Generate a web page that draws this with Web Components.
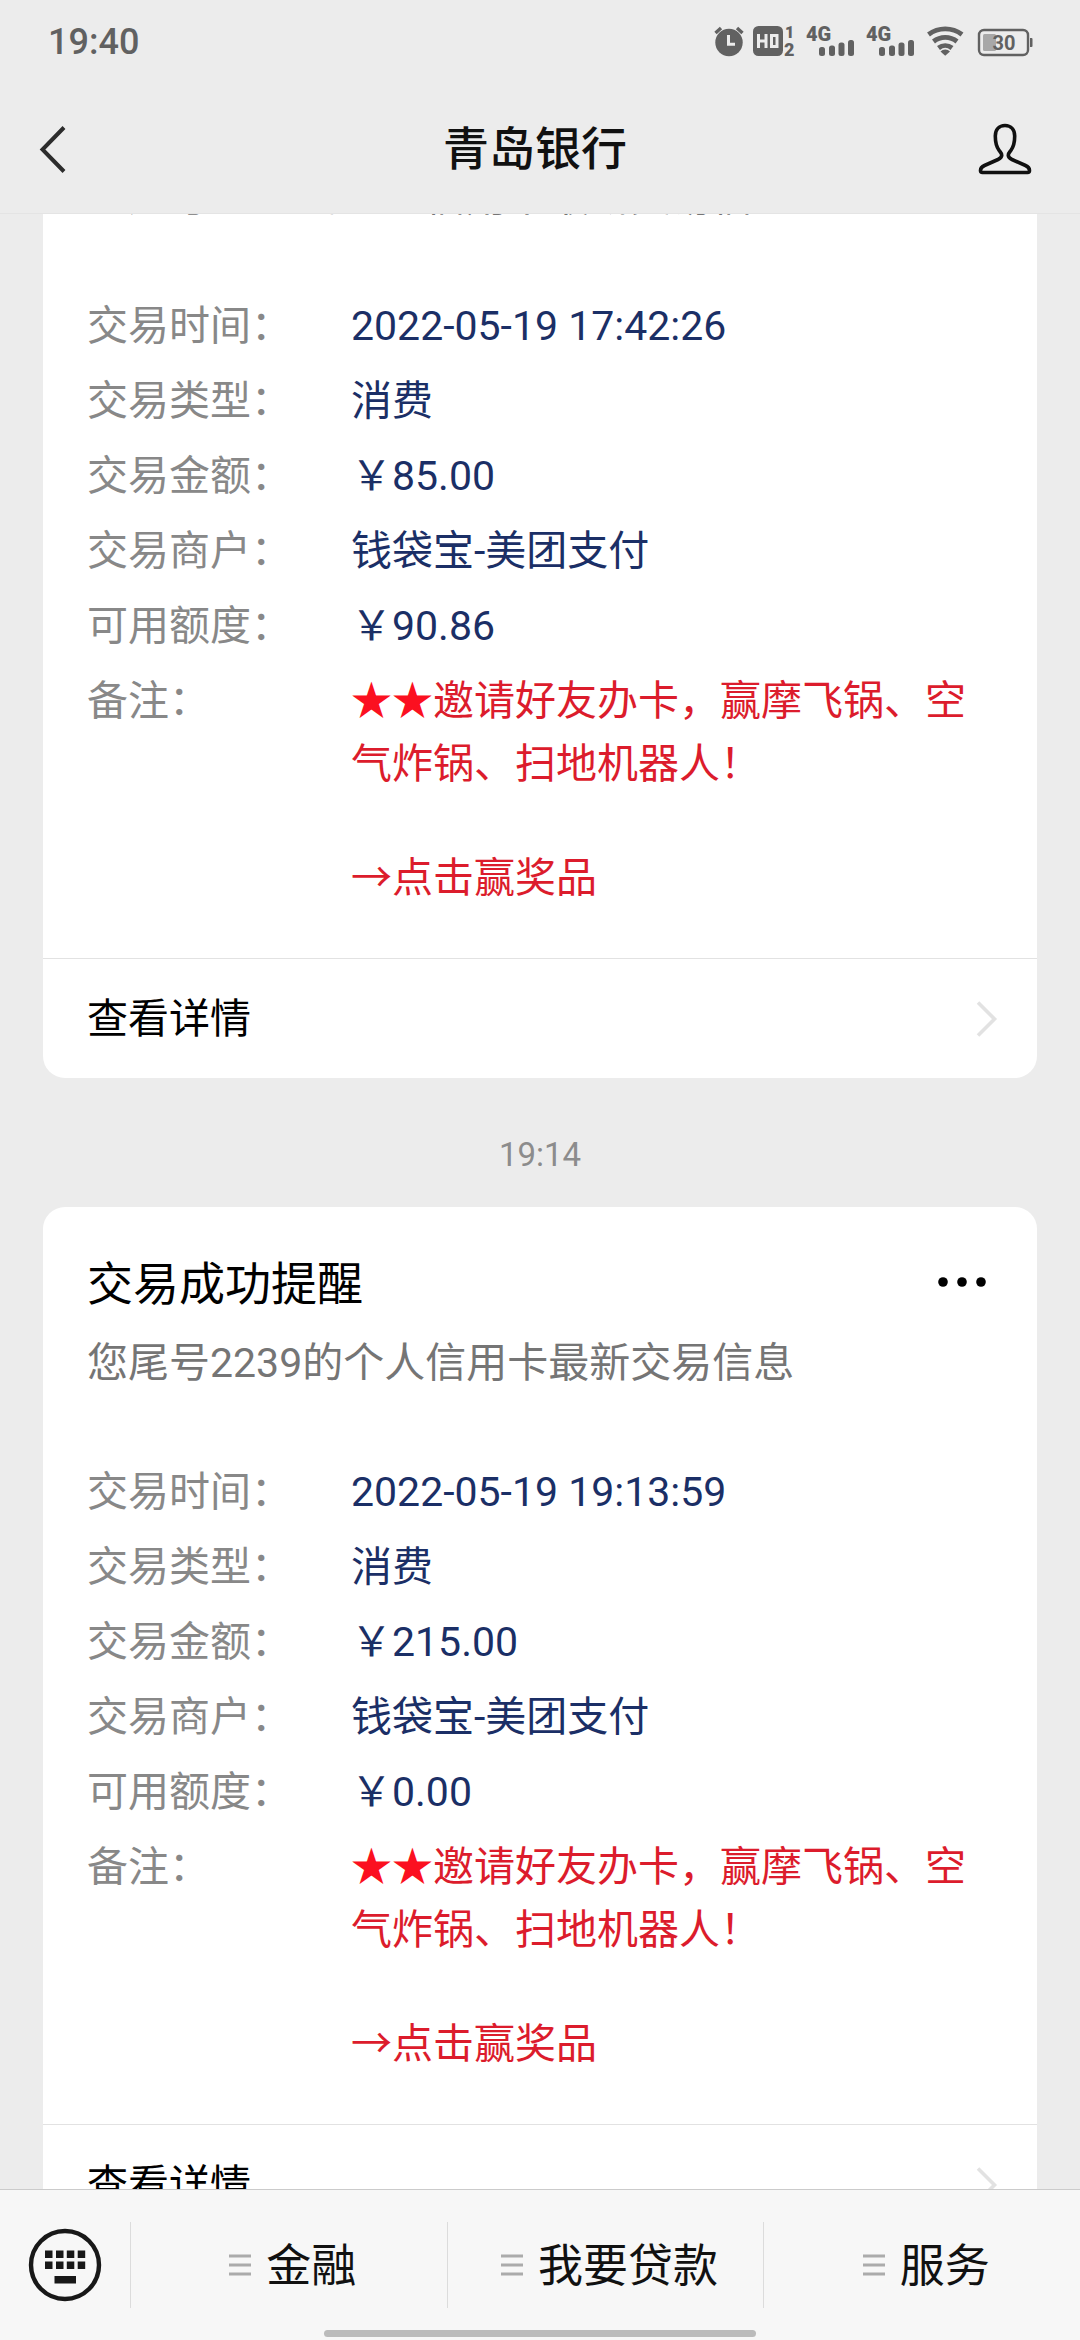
<!DOCTYPE html>
<html lang="zh-CN">
<head>
<meta charset="utf-8">
<meta name="viewport" content="width=device-width, initial-scale=1">
<title>青岛银行</title>
<style>
  html, body { height: 100%; }
  body { margin: 0; background: #ececec; color: #000; font-family: Roboto, "Noto Sans CJK SC", sans-serif; }
</style>
</head>
<body>
<chat-app></chat-app>

<template id="t-status">
  <style>
    :host { display: flex; align-items: center; justify-content: space-between; height: 84px; padding: 0 48px; box-sizing: border-box; color: #616161; }
    .time { font-size: 36px; line-height: 42px; font-weight: 500; }
    svg { display: block; overflow: visible; }
    text { font-family: Roboto, sans-serif; font-weight: 900; fill: #616161; }
  </style>
  <span class="time">19:40</span>
  <svg width="318" height="34" viewBox="714 26 318 34" fill="#616161" role="img" aria-label="状态图标">
    <circle cx="729" cy="43.500" r="13.700"/>
    <path d="M715.500 34l5.500-5M742.500 34l-5.500-5" stroke="#616161" stroke-width="3.400"/>
    <path d="M728.500 36v9.200h6.500" fill="none" stroke="#ececec" stroke-width="3"/>
    <rect x="753" y="27" width="30" height="30" rx="5.500"/>
    <path d="M758.500 35v14M766 35v14M758.500 42h7.500M771.500 36.500h5.500v11h-5.500z" fill="none" stroke="#ececec" stroke-width="3"/>
    <text x="785" y="38.500" font-size="16">1</text>
    <text x="784" y="56.500" font-size="18">2</text>
    <text x="806" y="41.500" font-size="20">4G</text>
    <g id="bars"><rect x="819" y="48" width="6" height="9" rx="2.500"/><rect x="829" y="46.500" width="6" height="10.500" rx="2.500"/><rect x="838.500" y="43.500" width="6" height="13.500" rx="2.500"/><rect x="848" y="41" width="6" height="16" rx="2.500"/></g>
    <text x="866" y="41.500" font-size="20">4G</text>
    <use href="#bars" x="60"/>
    <g fill="none" stroke="#616161" stroke-width="4.800">
      <path d="M928.500 35.500a28 28 0 0 1 33.500 0"/>
      <path d="M933.500 42.500a19 19 0 0 1 23.500 0"/>
      <path d="M938.500 49a11 11 0 0 1 13.500 0"/>
    </g>
    <path d="M940.500 52.500a6.500 6.500 0 0 1 9.500 0l-4.800 4.300z"/>
    <rect x="979" y="31" width="49" height="25" rx="5" fill="none" stroke="#616161" stroke-width="2.400"/>
    <rect x="983" y="35" width="13" height="17" rx="1.500" fill="#a8a8a8"/>
    <path d="M1030 39h1.500a1 1 0 0 1 1 1v7a1 1 0 0 1-1 1h-1.500z"/>
    <text x="992.500" y="50.500" font-size="20" style="font-weight:700">30</text>
  </svg>
</template>

<template id="t-nav">
  <style>
    :host { display: grid; grid-template-columns: 1fr auto 1fr; align-items: center; height: 130px; padding: 0 48px 0 38px; box-sizing: border-box; border-bottom: 1px solid #e4e4e4; }
    h1 { margin: 0; font-size: 46px; line-height: 60px; font-weight: 500; color: #111; }
    button { border: 0; padding: 0; background: none; display: block; }
    .me { justify-self: end; }
    svg { display: block; fill: none; }
  </style>
  <button aria-label="返回"><svg width="32" height="48" viewBox="0 0 32 48" stroke="#2c2c2c" stroke-width="4"><path d="M26 2.500L4.500 24.500L26 46.500"/></svg></button>
  <h1><slot></slot></h1>
  <button class="me" aria-label="公众号资料"><svg width="54" height="52" viewBox="0 0 54 52" stroke="#111" stroke-width="3.600" stroke-linejoin="round"><path d="M27 2.500c-6 0-9.700 4.300-9.700 10.500 0 5.500.7 10 3.700 14.300 1.400 2 2.900 2.700 2.700 5.200-.2 2.300-1.800 3.100-3.700 4L6.500 42.500C3.500 43.800 2.500 45 2.500 47.500c0 1.500.6 2 2 2h45c1.400 0 2-.5 2-2 0-2.500-1-3.700-4-5L34 36.500c-1.900-.9-3.500-1.700-3.700-4-.2-2.500 1.300-3.200 2.700-5.200 3-4.300 3.700-8.800 3.700-14.300C36.700 6.800 33 2.500 27 2.500z"/></svg></button>
</template>

<template id="t-row">
  <style>
    :host { display: flex; font-size: 41px; line-height: 63px; }
    .label { flex: none; width: 264px; color: #888; }
    .value { flex: 1; min-width: 0; color: #1b2f66; }
  </style>
  <span class="label"><slot name="label"></slot></span>
  <div class="value"><slot></slot></div>
</template>

<template id="t-card">
  <style>
    :host { display: block; background: #fff; border-radius: 22px; overflow: hidden; }
    .body { padding: 45px 44px 48px; }
    .head { display: flex; align-items: center; justify-content: space-between; }
    h2 { margin: 0; font-size: 46px; line-height: 64px; font-weight: 400; color: #000; }
    button { border: 0; padding: 0 6px 4px 0; background: none; display: block; }
    svg { display: block; }
    .sub { margin: 17px 0 68px; font-size: 41px; line-height: 60px; color: #757575; }
    .rows { display: flex; flex-direction: column; gap: 12px; }
    .remark { color: #dc1c2c; text-decoration: none; display: block; }
    .remark p { margin: 0; }
    .remark p + p { margin-top: 51px; }
    .star { color: #fb1020; }
    .more { display: flex; align-items: center; justify-content: space-between; height: 120px; box-sizing: border-box; padding: 0 38px 0 44px; border-top: 1px solid #e2e2e2; font-size: 41px; line-height: 60px; color: #000; text-decoration: none; }
  </style>
  <div class="body">
    <div class="head">
      <h2>交易成功提醒</h2>
      <button aria-label="更多"><svg width="50" height="12" viewBox="0 0 50 12"><circle cx="6" cy="6" r="4.800"/><circle cx="25" cy="6" r="4.800"/><circle cx="44" cy="6" r="4.800"/></svg></button>
    </div>
    <p class="sub">您尾号2239的个人信用卡最新交易信息</p>
    <div class="rows">
      <info-row><span slot="label">交易时间：</span><slot name="time"></slot></info-row>
      <info-row><span slot="label">交易类型：</span>消费</info-row>
      <info-row><span slot="label">交易金额：</span><slot name="amount"></slot></info-row>
      <info-row><span slot="label">交易商户：</span>钱袋宝-美团支付</info-row>
      <info-row><span slot="label">可用额度：</span><slot name="limit"></slot></info-row>
      <info-row><span slot="label">备注：</span><a class="remark" href="#prize"><p><span class="star">★★</span>邀请好友办卡，赢摩飞锅、空气炸锅、扫地机器人！</p><p>→点击赢奖品</p></a></info-row>
    </div>
  </div>
  <a class="more" href="#detail">查看详情<svg width="24" height="38" viewBox="0 0 24 38" fill="none" stroke="#e2e2e2" stroke-width="3.600"><path d="M3 2.500L19.500 19L3 35.500"/></svg></a>
</template>

<template id="t-menu">
  <style>
    :host { display: flex; align-items: center; position: relative; height: 151px; box-sizing: border-box; background: #f7f7f7; border-top: 1px solid #cbcbcb; }
    button { border: 0; padding: 0; margin: 0; background: none; font: inherit; color: #111; }
    .kbd { flex: none; width: 130px; display: grid; place-items: center; }
    .item { flex: 1; height: 86px; display: flex; align-items: center; justify-content: center; gap: 15px; border-left: 1px solid #dcdcdc; font-size: 45px; line-height: 60px; }
    .item span { padding-top: 4px; }
    svg { display: block; }
    .home { position: absolute; left: 30%; right: 30%; bottom: 3px; height: 7px; border-radius: 4px; background: #bbb; }
  </style>
  <button class="kbd" aria-label="键盘"><svg width="74" height="74" viewBox="0 0 74 74" fill="#181818"><circle cx="37" cy="37" r="34" fill="none" stroke="#181818" stroke-width="4.400"/><path d="M17 22.500h7.500v7.500H17zM28 22.500h7.500v7.500H28zM38.800 22.500h7.500v7.500h-7.500zM49.700 22.500h7.500v7.500h-7.500zM17 33.500h7.500v7.500H17zM28 33.500h7.500v7.500H28zM38.800 33.500h7.500v7.500h-7.500zM49.700 33.500h7.500v7.500h-7.500zM26.500 48H48v7.500H26.500z"/></svg></button>
  <div class="home"></div>
</template>

<template id="t-app">
  <style>
    :host { display: flex; flex-direction: column; height: 100vh; overflow: hidden; background: #ececec; }
    status-bar, nav-bar, menu-bar { flex: none; }
    main { flex: 1; min-height: 0; overflow-y: auto; scrollbar-width: none; padding: 43px; }
    time { display: block; padding: 53px 0 28px; text-align: center; font-size: 33px; line-height: 48px; color: #8c8c8c; }
  </style>
  <status-bar></status-bar>
  <nav-bar>青岛银行</nav-bar>
  <main>
    <notice-card><span slot="time">2022-05-19 17:42:26</span><span slot="amount">￥85.00</span><span slot="limit">￥90.86</span></notice-card>
    <time>19:14</time>
    <notice-card><span slot="time">2022-05-19 19:13:59</span><span slot="amount">￥215.00</span><span slot="limit">￥0.00</span></notice-card>
  </main>
  <menu-bar items="金融,我要贷款,服务"></menu-bar>
</template>

<script>
  const fromTemplate = id => class extends HTMLElement {
    constructor() {
      super();
      this.attachShadow({ mode: "open" }).append(document.getElementById(id).content.cloneNode(true));
    }
  };

  customElements.define("status-bar", class extends fromTemplate("t-status") {});
  customElements.define("nav-bar", class extends fromTemplate("t-nav") {});
  customElements.define("info-row", class extends fromTemplate("t-row") {});
  customElements.define("notice-card", class extends fromTemplate("t-card") {});

  customElements.define("menu-bar", class extends fromTemplate("t-menu") {
    connectedCallback() {
      const home = this.shadowRoot.querySelector(".home");
      for (const name of this.getAttribute("items").split(",")) {
        const b = document.createElement("button");
        b.className = "item";
        b.innerHTML = '<svg width="30" height="22" viewBox="0 0 30 22" stroke="#ababab" stroke-width="3"><path d="M8 2h22M8 11h22M8 20h22"/></svg><span></span>';
        b.lastChild.textContent = name;
        home.before(b);
      }
    }
  });

  // The feed opens part-way down, with the newest notice in view.
  customElements.define("chat-app", class extends fromTemplate("t-app") {
    connectedCallback() {
      this.shadowRoot.querySelector("main").scrollTop = 216;
    }
  });
</script>
</body>
</html>
